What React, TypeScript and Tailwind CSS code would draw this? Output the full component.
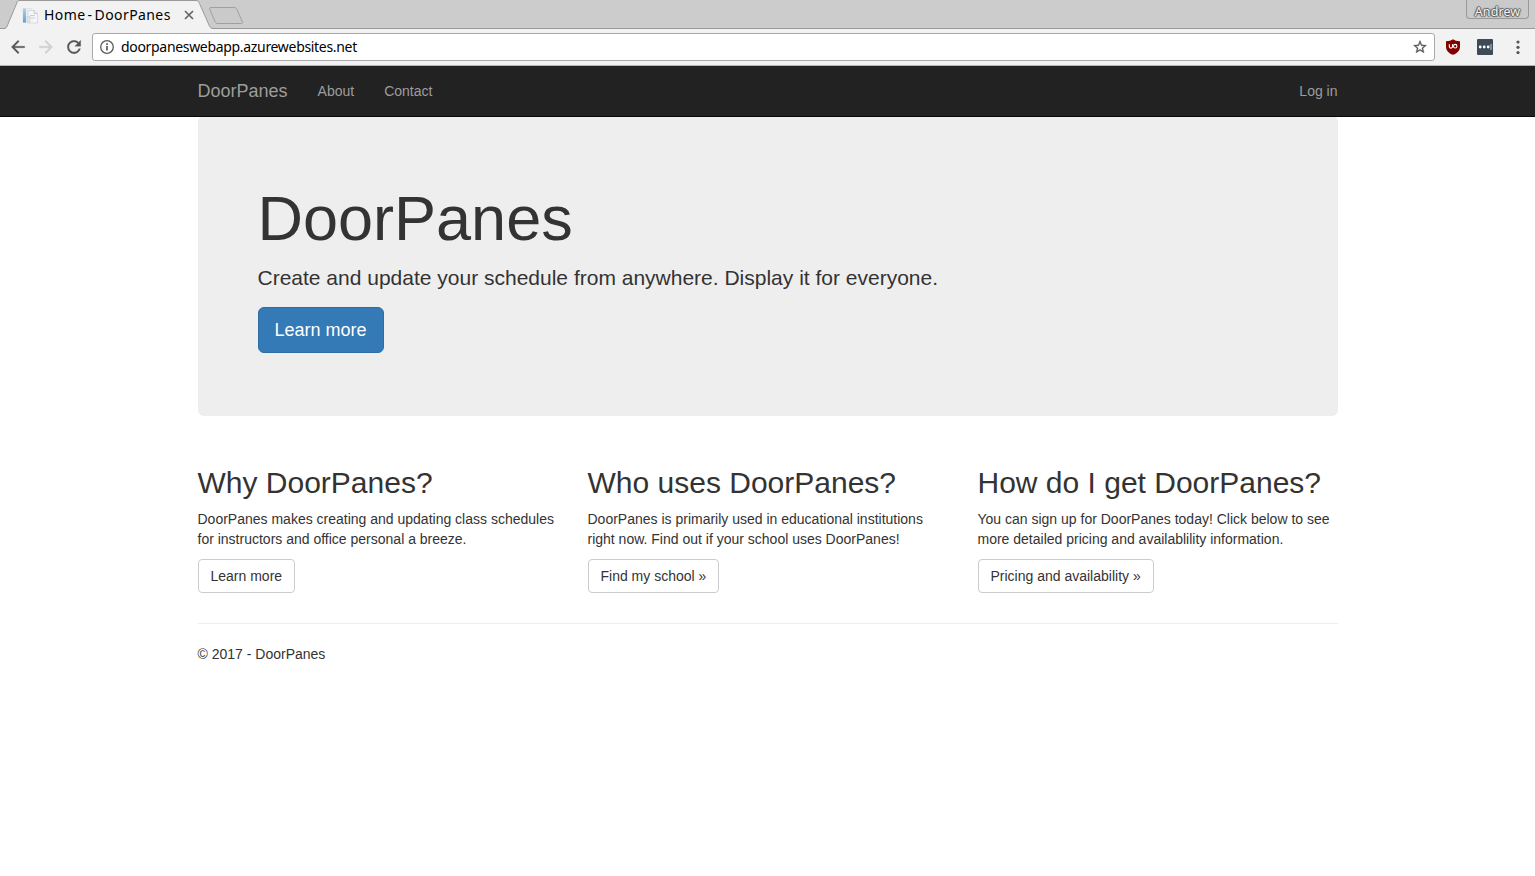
import React from 'react';

const columns = [
  {
    title: 'Why DoorPanes?',
    lines: ['DoorPanes makes creating and updating class schedules', 'for instructors and office personal a breeze.'],
    action: 'Learn more',
  },
  {
    title: 'Who uses DoorPanes?',
    lines: ['DoorPanes is primarily used in educational institutions', 'right now. Find out if your school uses DoorPanes!'],
    action: 'Find my school »',
  },
  {
    title: 'How do I get DoorPanes?',
    lines: ['You can sign up for DoorPanes today! Click below to see', 'more detailed pricing and availablility information.'],
    action: 'Pricing and availability »',
  },
];

function TabStrip() {
  return (
    <div className="relative flex h-[29px] bg-[#cccccc]">
      <svg className="absolute left-0 top-0" width="1535" height="29" viewBox="0 0 1535 29" fill="none">
        <path d="M0 28.5H1535" stroke="#999" />
        <path d="M4 29C6.500 28.500 6.800 27 7.800 24.500L17 2.500C17.600 1 18.600 .5 20 .5H196C198 .5 198.700 1.500 199.500 3.500L209 25C210 27.500 211 28.500 213 29Z" fill="#f2f2f2" />
        <path d="M4 28.500C6.500 28.500 6.800 27 7.800 24.500L17 2.500C17.600 1 18.600 .5 20 .5H196C198 .5 198.700 1.500 199.500 3.500L209 25C210 27.500 211 28.500 213 28.500" stroke="#999" />
        <path d="M211 7.500H234C235.500 7.500 236.300 8 237 9.500L242 21C242.900 22.800 242.500 23.500 241 23.500H218C216.500 23.500 215.700 23 215 21.500L210 10C209.200 8.300 209.500 7.500 211 7.500Z" fill="#cacaca" stroke="#a0a0a0" />
      </svg>
      <div className="relative flex h-[29px] w-[210px] items-center pl-[22px]">
        <svg width="16" height="16" viewBox="0 0 16 16" className="mt-[2px] shrink-0">
          <defs>
            <linearGradient id="fav" x1="0" y1="0" x2="0" y2="1">
              <stop offset="0" stopColor="#a8d4ee" />
              <stop offset="1" stopColor="#5aa5d3" />
            </linearGradient>
          </defs>
          <path d="M1 .5H10V14.500H1Z" fill="#eceff2" stroke="#d8dce0" strokeWidth=".6" />
          <path d="M1 .5H4V14.500H1Z" fill="url(#fav)" />
          <path d="M6 2.500H12L15.500 5.500V15H6Z" fill="#f5f6f8" stroke="#cfd3d8" strokeWidth=".8" />
          <path d="M12 2.500V5.500H15.500M8 7.500H13M8 10H13" stroke="#c4cbd3" strokeWidth=".9" fill="none" />
          <path d="M5 8.500H8V14H5Z" fill="#e1e5ea" stroke="#c8cdd3" strokeWidth=".6" />
        </svg>
        <span className="ml-[6px] mt-px whitespace-nowrap font-['Noto_Sans',sans-serif] text-[14px] leading-5 tracking-[0.400px] text-black [word-spacing:-1.900px]">Home - DoorPanes</span>
        <svg className="absolute left-[184px] top-[10px]" width="10" height="10" viewBox="0 0 10 10">
          <path d="M1 1L9 9M9 1L1 9" stroke="#666" strokeWidth="1.700" />
        </svg>
      </div>
      <div className="relative ml-auto mr-[6px] flex h-[19px] w-[63px] items-center justify-center rounded-b-[4px] border border-t-0 border-[#999] bg-[#cacaca] pt-[5px] font-['Noto_Sans',sans-serif] text-[12.500px] leading-4 tracking-[0.100px] text-[#f4f4f4] [text-shadow:0_1px_1px_#555,1px_0_1px_#555,-1px_0_1px_#555,0_-1px_1px_#555]">
        Andrew
      </div>
    </div>
  );
}

function Toolbar() {
  return (
    <div className="flex h-[37px] items-start border-b border-[#b4b4b4] bg-[#f2f2f2] pt-[4px]">
      <div className="flex h-7 w-[92px] items-center pl-[8px]">
        <svg width="20" height="20" viewBox="0 0 24 24" className="shrink-0" fill="#555">
          <path d="M20 11H7.830l5.590-5.590L12 4l-8 8 8 8 1.410-1.410L7.830 13H20v-2z" stroke="#555" strokeWidth=".3" />
        </svg>
        <svg width="20" height="20" viewBox="0 0 24 24" className="ml-[8px] shrink-0" fill="#d0d0d0">
          <path d="M12 4l-1.410 1.410L16.170 11H4v2h12.170l-5.580 5.590L12 20l8-8z" stroke="#d0d0d0" strokeWidth=".3" />
        </svg>
        <svg width="20" height="20" viewBox="0 0 24 24" className="ml-[8px] shrink-0" fill="#555">
          <path d="M17.650 6.350C16.200 4.900 14.210 4 12 4c-4.420 0-7.990 3.580-7.990 8s3.570 8 7.990 8c3.730 0 6.840-2.550 7.730-6h-2.080c-.82 2.330-3.040 4-5.650 4-3.310 0-6-2.690-6-6s2.690-6 6-6c1.660 0 3.140.69 4.220 1.780L13 11h7V4l-2.350 2.350z" stroke="#555" strokeWidth=".3" />
        </svg>
      </div>
      <div className="flex h-7 w-[1343px] items-center rounded-[3px] border border-[#a9a9a9] bg-white pl-[7px] pr-[6px]">
        <svg width="14" height="14" viewBox="0 0 14 14" fill="none">
          <circle cx="7" cy="7" r="6.300" stroke="#5a5a5a" strokeWidth="1.300" />
          <path d="M7 6V10.500M7 3.300V5" stroke="#5a5a5a" strokeWidth="1.700" />
        </svg>
        <span className="ml-[7px] whitespace-nowrap font-['Noto_Sans',sans-serif] text-[14px] leading-5 tracking-[-0.320px] text-black">doorpaneswebapp.azurewebsites.net</span>
        <svg className="ml-auto" width="16" height="16" viewBox="0 0 24 24" fill="#555">
          <path d="M22 9.240l-7.190-.62L12 2 9.190 8.630 2 9.240l5.460 4.730L5.820 21 12 17.270 18.180 21l-1.630-7.030L22 9.240zM12 15.400l-3.760 2.270 1-4.280-3.320-2.880 4.380-.38L12 6.100l1.710 4.040 4.380.38-3.320 2.880 1 4.280L12 15.400z" stroke="#555" strokeWidth=".4" />
        </svg>
      </div>
      <div className="flex h-7 flex-1 items-center">
        <svg className="ml-[11px]" width="14" height="16" viewBox="0 0 14 16" fill="none">
          <path d="M7 .3C8.600 1.500 11 2.200 14 2.200V7.500C14 11.500 11.500 14.300 7 15.800C2.500 14.300 0 11.500 0 7.500V2.200C3 2.200 5.400 1.500 7 .3Z" fill="#800000" />
          <path d="M3.300 5.200V7.500C3.300 9.600 6.500 9.600 6.500 7.500V5.200" stroke="#fff" strokeWidth="1.100" />
          <ellipse cx="9.200" cy="7.200" rx="1.700" ry="1.800" stroke="#fff" strokeWidth="1.100" />
        </svg>
        <svg className="ml-[17px]" width="16" height="16" viewBox="0 0 16 16">
          <rect width="16" height="16" rx="1" fill="#3d4b58" />
          <circle cx="3.200" cy="8" r="1.400" fill="#fff" />
          <circle cx="7.200" cy="8" r="1.400" fill="#fff" />
          <circle cx="11.200" cy="8" r="1.400" fill="#fff" />
          <path d="M14 5V11" stroke="#c5cbd0" />
        </svg>
        <svg className="ml-[22.500px]" width="4" height="14" viewBox="0 0 4 14" fill="#555">
          <circle cx="2" cy="2" r="1.600" />
          <circle cx="2" cy="7.300" r="1.600" />
          <circle cx="2" cy="12.500" r="1.600" />
        </svg>
      </div>
    </div>
  );
}

export default function App() {
  return (
    <div className="h-[876px] w-[1535px] overflow-hidden bg-white font-['Liberation_Sans',Arial,sans-serif] text-[14px] leading-5 text-[#333]">
      <TabStrip />
      <Toolbar />
      <nav className="relative z-10 h-[51px] border-b border-[#080808] bg-[#222]">
        <div className="mx-auto flex h-[50px] w-[1140px] items-center text-[#9d9d9d]">
          <a className="text-[18px]">DoorPanes</a>
          <a className="ml-[30px]">About</a>
          <a className="ml-[30px]">Contact</a>
          <a className="ml-auto">Log in</a>
        </div>
      </nav>
      <main className="mx-auto -mt-px w-[1140px]">
        <section className="h-[300px] rounded-[6px] bg-[#eee] px-[60px] pt-[68px]">
          <h1 className="text-[63px] leading-[69.300px]">DoorPanes</h1>
          <p className="mt-[10px] text-[21px] leading-[30px]">Create and update your schedule from anywhere. Display it for everyone.</p>
          <button className="mt-[14px] block h-[46px] rounded-[6px] border border-[#2e6da4] bg-[#337ab7] px-4 text-[18px] leading-6 text-white">Learn more</button>
        </section>
        <div className="mt-[50px] flex gap-[30px]">
          {columns.map((c) => (
            <section key={c.title} className="w-[360px]">
              <h2 className="whitespace-nowrap text-[30px] leading-[33px]">{c.title}</h2>
              <p className="mt-[10px] whitespace-nowrap">
                {c.lines[0]}
                <br />
                {c.lines[1]}
              </p>
              <button className="mt-[10px] block h-[34px] rounded-[4px] border border-[#ccc] bg-white px-3">{c.action}</button>
            </section>
          ))}
        </div>
        <hr className="mt-[30px] border-t border-[#eee]" />
        <footer className="mt-5">© 2017 - DoorPanes</footer>
      </main>
    </div>
  );
}
